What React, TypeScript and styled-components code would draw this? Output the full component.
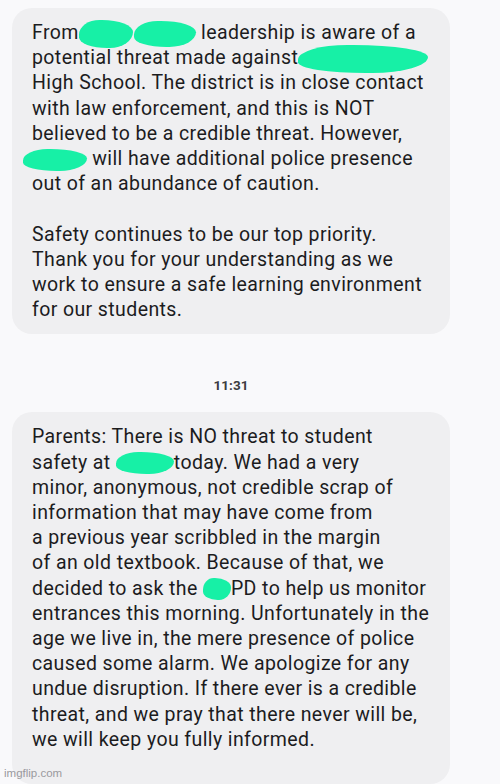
import React from "react";
import styled, { createGlobalStyle } from "styled-components";

const Global = createGlobalStyle`
  html, body { margin: 0; padding: 0; background: #f9f9fb; }
  body { font-family: Roboto, "Noto Sans", "Liberation Sans", sans-serif; }
`;

const Page = styled.div`
  position: relative;
  width: 500px;
  height: 784px;
  overflow: hidden;
  box-sizing: border-box;
  padding: 8px 50px 0 12px;
  display: flex;
  flex-direction: column;
`;

const Bubble = styled.div<{ $padBottom: number }>`
  background: #efeff1;
  border-radius: 20px;
  padding: 12px 8px ${(p) => p.$padBottom}px 20px;
  color: #1c1c1e;
  font-size: 19.5px;
  line-height: 25.2px;
  letter-spacing: 0.4px;
`;

const Para = styled.p`
  margin: 0;
  & + & { margin-top: 25.2px; }
`;

const Line = styled.span`
  display: block;
  white-space: nowrap;
`;

const Redact = styled.span<{ $w: number; $h?: number; $r?: string }>`
  display: inline-block;
  width: ${(p) => p.$w}px;
  height: ${(p) => p.$h ?? 26}px;
  margin: -6px 0;
  vertical-align: middle;
  background: #17f0a6;
  border-radius: ${(p) => p.$r ?? "40% 60% 45% 55% / 55% 45% 60% 40%"};
`;

const Stamp = styled.div`
  height: 78px;
  display: flex;
  align-items: center;
  justify-content: center;
  padding-top: 24px;
  box-sizing: border-box;
  font-size: 13.5px;
  font-weight: 700;
  color: #3c3c40;
`;

const Watermark = styled.div`
  position: absolute;
  left: 4px;
  bottom: 5px;
  font-family: "Liberation Sans", Arial, sans-serif;
  font-size: 11.5px;
  color: #9a9a9e;
`;

export default function App() {
  return (
    <>
      <Global />
      <Page>
        <Bubble $padBottom={12}>
          <Para>
            <Line>
              From
              <Redact $w={54} $h={28} style={{ marginRight: 1 }} />
              <Redact $w={62} $h={26} /> leadership is aware of a
            </Line>
            <Line>
              potential threat made against
              <Redact $w={130} $h={28} />
            </Line>
            <Line>High School. The district is in close contact</Line>
            <Line>with law enforcement, and this is NOT</Line>
            <Line>believed to be a credible threat. However,</Line>
            <Line>
              <Redact $w={64} $h={22} style={{ marginLeft: -9 }} /> will have
              additional police presence
            </Line>
            <Line>out of an abundance of caution.</Line>
          </Para>
          <Para>
            <Line>Safety continues to be our top priority.</Line>
            <Line>Thank you for your understanding as we</Line>
            <Line>work to ensure a safe learning environment</Line>
            <Line>for our students.</Line>
          </Para>
        </Bubble>
        <Stamp>11:31</Stamp>
        <Bubble $padBottom={32}>
          <Para>
            <Line>Parents: There is NO threat to student</Line>
            <Line>
              safety at <Redact $w={58} $h={22} />
              today. We had a very
            </Line>
            <Line>minor, anonymous, not credible scrap of</Line>
            <Line>information that may have come from</Line>
            <Line>a previous year scribbled in the margin</Line>
            <Line>of an old textbook. Because of that, we</Line>
            <Line>
              decided to ask the <Redact $w={28} $h={22} />
              PD to help us monitor
            </Line>
            <Line>entrances this morning. Unfortunately in the</Line>
            <Line>age we live in, the mere presence of police</Line>
            <Line>caused some alarm. We apologize for any</Line>
            <Line>undue disruption. If there ever is a credible</Line>
            <Line>threat, and we pray that there never will be,</Line>
            <Line>we will keep you fully informed.</Line>
          </Para>
        </Bubble>
        <Watermark>imgflip.com</Watermark>
      </Page>
    </>
  );
}
